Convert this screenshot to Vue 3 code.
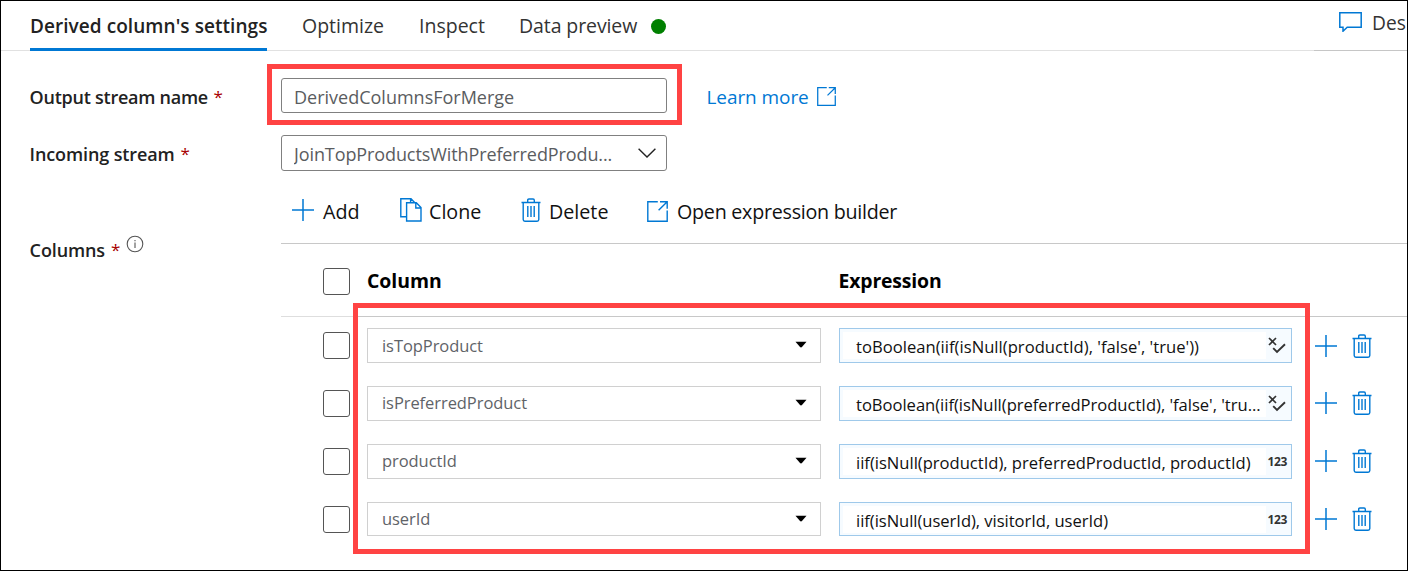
<script setup>
import { h } from 'vue'

const rows = [
  { column: 'isTopProduct', expression: "toBoolean(iif(isNull(productId), 'false', 'true'))", type: 'bool', spacing: 0.02 },
  { column: 'isPreferredProduct', expression: "toBoolean(iif(isNull(preferredProductId), 'false', 'tru...", type: 'bool', spacing: -0.03 },
  { column: 'productId', expression: 'iif(isNull(productId), preferredProductId, productId)', type: 'num', spacing: -0.02 },
  { column: 'userId', expression: 'iif(isNull(userId), visitorId, userId)', type: 'num', spacing: -0.05 }
]

const svg = (w, ht, d, sw = 1.4) => () =>
  h('svg', { width: w, height: ht, viewBox: `0 0 ${w} ${ht}`, fill: 'none', stroke: '#0078d4', 'stroke-width': sw },
    [h('path', { d })])

const PlusIcon = svg(22, 22, 'M11 0V22M0 11H22', 1.5)
const TrashIcon = svg(20, 24, 'M0.5 4.5H19.5M6.7 4.3V2.2Q6.7 1 7.9 1H12.1Q13.3 1 13.3 2.2V4.3M2.2 4.7V21.5Q2.2 23.2 3.9 23.2H16.1Q17.8 23.2 17.8 21.5V4.7M6.8 8V19M10 8V19M13.2 8V19')
const CloneIcon = svg(22, 24, 'M6.3 18.8H0.8V0.8H11L14.6 4.4M6.6 4.8H16.3L21 9.6V23H6.6ZM15.8 5V10H21M10.6 1V4.8')
const OpenIcon = svg(21, 21, 'M10.8 0.8H0.8V20.2H20.2V9.5M13 0.8H20.2V7.8M20.2 0.8L11.6 9.3')
const CommentIcon = svg(23, 20, 'M0.8 0.8H22.2V15.2H8.2L4 19.2V15.2H0.8Z', 1.5)
</script>

<template>
  <div class="page">
    <header class="tabs">
      <div class="tab active">Derived column's settings</div>
      <div class="tab optimize">Optimize</div>
      <div class="tab inspect">Inspect</div>
      <div class="tab preview">Data preview</div>
      <span class="dot"></span>
      <div class="describe"><CommentIcon /><span>Des</span></div>
    </header>

    <div class="field first">
      <label class="label output">Output stream name<i>*</i></label>
      <div class="input"><span>DerivedColumnsForMerge</span></div>
      <a class="learn">Learn more<OpenIcon /></a>
    </div>
    <div class="field second">
      <label class="label">Incoming stream<i>*</i></label>
      <div class="input dropdown">
        <span>JoinTopProductsWithPreferredProdu...</span>
        <svg width="18" height="10" viewBox="0 0 18 10" fill="none" stroke="#222" stroke-width="1.4"><path d="M0.6 0.7L9 9L17.4 0.7" /></svg>
      </div>
    </div>

    <div class="columns">
      <label class="label columns-label">Columns<i>*</i>
        <svg width="18" height="18" viewBox="0 0 18 18" fill="none" stroke="#555" stroke-width="1.1"><circle cx="9" cy="9" r="7.8" /><path d="M9 7.6V13M9 5V6.3" /></svg>
      </label>
      <div class="panel">
        <div class="toolbar">
          <div class="tool add"><PlusIcon /><span>Add</span></div>
          <div class="tool clone"><CloneIcon /><span>Clone</span></div>
          <div class="tool delete"><TrashIcon /><span>Delete</span></div>
          <div class="tool open"><OpenIcon /><span>Open expression builder</span></div>
        </div>
        <div class="grid head">
          <span class="check"></span>
          <b>Column</b>
          <b>Expression</b>
        </div>
        <div class="body">
          <div v-for="row in rows" :key="row.column" class="grid">
            <span class="check"></span>
            <div class="combo">
              <span>{{ row.column }}</span>
              <svg width="12" height="8" viewBox="0 0 12 8"><path d="M0.5 0.8H11.5L7.2 5.8Q6 7 4.8 5.8Z" fill="#000" /></svg>
            </div>
            <div class="expr">
              <span class="code" :style="{ letterSpacing: row.spacing + 'px' }">{{ row.expression }}</span>
              <span class="kind">
                <svg v-if="row.type === 'bool'" width="18" height="17" viewBox="0 0 18 17" fill="none" stroke="#333" stroke-width="1.9"><path d="M1 1L8 8M8 1L1 8" stroke-width="1.7" /><path d="M5.2 11.2L9 15L17 7.2" /></svg>
                <template v-else>123</template>
              </span>
            </div>
            <PlusIcon class="row-plus" />
            <TrashIcon class="row-trash" />
          </div>
        </div>
      </div>
    </div>

    <div class="mark mark-name"></div>
    <div class="mark mark-rows"></div>
  </div>
</template>

<style scoped>
.page {
  position: relative;
  box-sizing: border-box;
  width: 1408px;
  height: 571px;
  border: 1px solid #000;
  background: #fff;
  color: #222;
  font-family: "Open Sans", "Noto Sans", sans-serif;
  overflow: hidden;
  white-space: nowrap;
}
svg { display: block; flex: none; }
.tabs {
  display: flex;
  box-sizing: border-box;
  height: 50px;
  padding-left: 29px;
  background: linear-gradient(to right, #e1e1e1 1313px, #c6c6c6 1313px) bottom / 100% 1px no-repeat;
  font-size: 19.5px;
  line-height: 50px;
  color: #333;
}
.tab { box-sizing: border-box; height: 50px; }
.active {
  width: 237px;
  border-bottom: 3px solid #0078d4;
  font-weight: 580;
  font-size: 19px;
  letter-spacing: 0.06px;
  color: #222;
}
.active + .tab { margin-left: 35px; }
.optimize { width: 117px; }
.inspect { width: 100px; }
.preview { width: 132px; letter-spacing: -0.1px; }
.dot {
  width: 15px;
  height: 15px;
  margin-top: 18px;
  border-radius: 50%;
  background: #008000;
}
.describe {
  display: flex;
  width: 68px;
  margin-left: auto;
  font-size: 19.2px;
  line-height: 44px;
}
.describe svg { margin-top: 11px; }
.describe span { margin-left: 10px; }
.field { display: flex; align-items: center; padding-left: 28px; }
.first { height: 35px; margin-top: 27px; }
.second { height: 36px; margin-top: 22px; }
.label {
  display: flex;
  width: 252px;
  flex: none;
  font-size: 18px;
  font-weight: 580;
  letter-spacing: -0.12px;
  line-height: 30px;
  padding: 2px 0 0 0.6px;
  box-sizing: border-box;
}
.output { letter-spacing: -0.25px; }
.label i { margin-left: 6px; font-size: 17px; font-style: normal; font-weight: 400; color: #a80000; }
.output i { margin-left: 5.5px; }
.input {
  display: flex;
  align-items: center;
  justify-content: space-between;
  box-sizing: border-box;
  width: 386px;
  height: 100%;
  padding: 0 10px 0 12px;
  border: 1px solid #808080;
  border-radius: 3px;
  font-size: 18px;
  color: #5a5c60;
}
.input span { height: 24px; line-height: 26px; overflow: hidden; }
.dropdown span { line-height: 27px; height: 27px; padding-top: 2px; letter-spacing: -0.1px; }
.learn {
  display: flex;
  align-items: center;
  margin-left: 39.5px;
  padding-top: 2px;
  font-size: 19px;
  letter-spacing: -0.08px;
  color: #0078d4;
}
.learn svg { width: 19px; height: 19px; margin-left: 8px; }
.columns { display: flex; padding-left: 28px; }
.columns-label { height: 32px; padding-top: 0; margin-top: 64px; }
.columns-label svg { margin: 0 0 0 6px; }
.panel { flex: 1; min-width: 0; }
.toolbar {
  display: flex;
  align-items: center;
  box-sizing: border-box;
  height: 73px;
  padding: 7px 0 0 11px;
  border-bottom: 1px solid #c8c8c8;
  font-size: 19.7px;
  color: #111;
}
.tool { display: flex; align-items: center; }
.tool svg { margin-bottom: 2px; }
.tool span { padding-top: 2px; }
.add { width: 108px; }
.clone { width: 121px; }
.delete { width: 126px; }
.add span { margin-left: 9px; }
.clone span { margin-left: 7px; }
.delete span { margin-left: 8px; }
.open svg { margin-bottom: 0; margin-top: 1px; }
.open span { margin-left: 9px; letter-spacing: -0.26px; }
.grid {
  display: grid;
  grid-template-columns: 26.5px 454px 453.5px 22px 20px;
  column-gap: 17.5px;
  align-items: center;
  height: 34.6px;
  padding-left: 42px;
}
.head {
  height: 73px;
  box-sizing: border-box;
  background: linear-gradient(to right, #dedede 77px, #c8c8c8 77px) bottom / 100% 1px no-repeat;
  font-size: 19.4px;
  color: #000;
}
.head b:last-child { letter-spacing: -0.15px; }
.head .check { margin-top: 2px; }
.body { display: flex; flex-direction: column; gap: 23.2px; padding-top: 11.4px; }
.check {
  box-sizing: border-box;
  width: 27px;
  height: 27px;
  border: 1px solid #555;
  border-radius: 3px;
}
.combo, .expr {
  display: flex;
  align-items: center;
  box-sizing: border-box;
  height: 100%;
  border: 1px solid #d0d0d0;
  font-size: 16.5px;
}
.combo { justify-content: space-between; padding: 0 13px 0 14px; color: #5f6368; }
.combo svg { margin-bottom: 1px; }
.combo span { line-height: 22px; letter-spacing: -0.07px; }
.expr {
  justify-content: space-between;
  border-color: #9fc9ea;
  padding-left: 16.5px;
  background: linear-gradient(#fff, #fff) 3px 3px / 423px 27px no-repeat #f6fbff;
  font-size: 16.6px;
  color: #111;
}
.code { padding-top: 2px; }
.kind { width: 23.5px; font-size: 12px; font-weight: 700; letter-spacing: -0.3px; color: #333; }
.row-plus { margin-left: 5px; }
.row-trash { margin-left: 3px; }
.mark { position: absolute; box-sizing: border-box; border: 5px solid #ff4343; }
.mark-name { left: 266px; top: 63px; width: 415px; height: 61px; }
.mark-rows { left: 352px; top: 302px; width: 957px; height: 251px; }
</style>

<style>
body { background: #fff; }
</style>
